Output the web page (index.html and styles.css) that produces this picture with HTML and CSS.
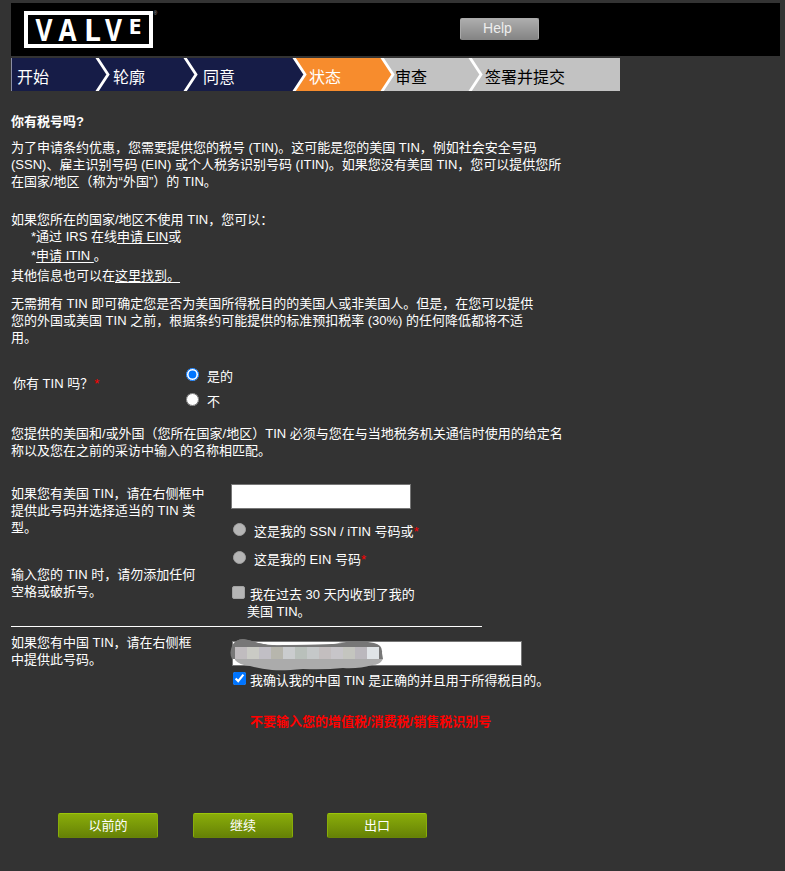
FILE: index.html
```html
<!DOCTYPE html>
<html lang="zh-CN">
<head>
<meta charset="utf-8">
<title>你有税号吗?</title>
<link rel="stylesheet" href="styles.css">
</head>
<body>
<header class="header">
  <svg class="logo" width="136" height="40" viewBox="0 0 136 40" role="img" aria-label="Valve">
    <rect x="2" y="2" width="125" height="33" fill="none" stroke="#fff" stroke-width="4"/>
    <g class="logo-text">
      <text x="11.500" y="29.500" textLength="17" lengthAdjust="spacingAndGlyphs">V</text>
      <text x="34.500" y="29.500" textLength="18" lengthAdjust="spacingAndGlyphs">A</text>
      <text x="60" y="29.500" textLength="17" lengthAdjust="spacingAndGlyphs">L</text>
      <text x="81" y="29.500" textLength="17" lengthAdjust="spacingAndGlyphs">V</text>
      <text class="logo-small" x="104.500" y="22.500" textLength="13" lengthAdjust="spacingAndGlyphs">E</text>
    </g>
    <text class="logo-mark" x="129.500" y="4">®</text>
  </svg>
  <button class="help" type="button">Help</button>
</header>

<nav class="steps">
  <svg class="steps-shape" width="609" height="33" viewBox="0 0 609 33" aria-hidden="true">
    <rect width="609" height="33" fill="#c2c2c2"/>
    <path d="M283 0H371L383 16.500L371 33H283Z" fill="#f78c2d"/>
    <path d="M0 0H283L295 16.500L283 33H0Z" fill="#161c47"/>
    <path d="M.5 0V33" stroke="#8b8ea3"/>
    <g fill="none" stroke="#fff" stroke-width="2.800">
      <path d="M85.500 -1L97 16.500L85.500 34"/><path d="M173.500 -1L185 16.500L173.500 34"/><path d="M282.500 -1L294 16.500L282.500 34"/><path d="M370.500 -1L382 16.500L370.500 34"/><path d="M458.500 -1L470 16.500L458.500 34"/>
    </g>
  </svg>
  <span class="step">开始</span><span class="step">轮廓</span><span class="step">同意</span><span class="step">状态</span><span class="step todo">审查</span><span class="step todo">签署并提交</span>
</nav>

<main>
  <h1 class="title">你有税号吗?</h1>
  <p class="intro">为了申请条约优惠，您需要提供您的税号 (TIN)。这可能是您的美国 TIN，例如社会安全号码<br>(SSN)、雇主识别号码 (EIN) 或个人税务识别号码 (ITIN)。如果您没有美国 TIN，您可以提供您所<br>在国家/地区（称为“外国”）的 TIN。</p>
  <p class="options">如果您所在的国家/地区不使用 TIN，您可以：</p>
  <p class="option">*通过 IRS 在线<a href="#">申请 EIN</a>或</p>
  <p class="option second">*<a href="#">申请 ITIN </a>。</p>
  <p class="more">其他信息也可以在<a href="#">这里找到。</a></p>
  <p class="note">无需拥有 TIN 即可确定您是否为美国所得税目的的美国人或非美国人。但是，在您可以提供<br>您的外国或美国 TIN 之前，根据条约可能提供的标准预扣税率 (30%) 的任何降低都将不适<br>用。</p>

  <div class="question">
    <span>你有 TIN 吗？<span class="req">*</span></span>
    <div class="answers">
      <label class="choice"><input type="radio" name="has" checked>是的</label>
      <label class="choice"><input type="radio" name="has">不</label>
    </div>
  </div>

  <p class="match">您提供的美国和/或外国（您所在国家/地区）TIN 必须与您在与当地税务机关通信时使用的给定名<br>称以及您在之前的采访中输入的名称相匹配。</p>

  <section class="us">
    <div>
      <p>如果您有美国 TIN，请在右侧框中<br>提供此号码并选择适当的 TIN 类<br>型。</p>
      <p class="format">输入您的 TIN 时，请勿添加任何<br>空格或破折号。</p>
    </div>
    <div class="us-fields">
      <input class="field" type="text">
      <label class="kind"><i class="off-radio"></i>这是我的 SSN / iTIN 号码或<span class="req-near">*</span></label>
      <label class="kind ein"><i class="off-radio"></i>这是我的 EIN 号码<span class="req-near">*</span></label>
      <label class="recent"><i class="off-check"></i><span><span class="recent-first">我在过去 30 天内收到了我的</span><br>美国 TIN。</span></label>
    </div>
  </section>

  <section class="cn">
    <p>如果您有中国 TIN，请在右侧框<br>中提供此号码。</p>
    <div class="cn-fields">
      <div class="masked">
        <input class="field wide" type="text">
        <svg class="mask" width="156" height="34" viewBox="0 0 156 34" aria-hidden="true">
          <path d="M2 8Q6 1 13 1Q20 2 28 5Q41 8 53 7L103 6Q128 1 144 5Q153 7 152 15L153 21H2Q-1 15 2 8Z" fill="#777"/>
          <path d="M7 4H22L31 5Q41 8 53 7L100 6L112 5H22Z" fill="#fff"/>
          <path d="M2 8Q6 1 13 1Q20 2 28 5Q41 8 53 7V10H2Z" fill="#777"/>
          <path d="M5 21H153Q150 27 142 27Q129 31 113 30Q94 32 73 31Q53 33 42 32Q30 31 20 28Q9 27 5 22Z" fill="#ababab"/>
          <g>
            <path d="M5 9h12v12H5z" fill="#c0bcbf"/><path d="M17 9h12v12H17z" fill="#cacbc5"/><path d="M29 9h12v12H29z" fill="#c1bfc5"/><path d="M41 9h12v12H41z" fill="#b7b6ad"/><path d="M53 9h12v12H53z" fill="#caccce"/><path d="M65 9h12v12H65z" fill="#b9c0bb"/><path d="M77 9h12v12H77z" fill="#c5c8c9"/><path d="M89 9h12v12H89z" fill="#c3bebf"/><path d="M101 9h12v12h-12z" fill="#c7c5c9"/><path d="M113 9h12v12h-12z" fill="#c4c5bf"/><path d="M125 9h12v12h-12z" fill="#bbb8bd"/><path d="M137 9h12v12h-12z" fill="#e0e4e7"/>
          </g>
        </svg>
      </div>
      <label class="confirm"><input type="checkbox" checked>我确认我的中国 TIN 是正确的并且用于所得税目的。</label>
      <p class="warning">不要输入您的增值税/消费税/销售税识别号</p>
    </div>
  </section>

  <div class="actions">
    <button type="button">以前的</button>
    <button type="button">继续</button>
    <button type="button">出口</button>
  </div>
</main>
</body>
</html>
```
FILE: styles.css
```css
* { box-sizing: border-box; }
body {
  margin: 0;
  padding: 3px 5px 0 11px;
  min-height: 871px;
  overflow: hidden;
  background: #333;
  color: #fff;
  font: 13px/17px "Liberation Sans", "Noto Sans CJK SC", sans-serif;
  white-space: nowrap;
}
p, h1 { margin: 0; }
a { color: inherit; text-underline-offset: 2px; }
input { accent-color: #0075ff; }

.header { display: flex; height: 53px; background: #000; }
.logo { margin: 8px 0 0 13px; overflow: visible; }
.logo-text { fill: #fff; font: bold 31px "Open Sans", sans-serif; }
.logo-small { font-size: 21px; }
.logo-mark { fill: #aaa; font-size: 5px; }
.help {
  width: 79px; height: 22px; margin: 15px 0 0 300px; padding: 0 4px 2px 0;
  border: 1px solid #aaa; border-bottom-color: #858585; border-radius: 2px;
  background: linear-gradient(#adadad, #858585);
  color: #eee; font: 14px/18px "Liberation Sans", sans-serif;
}

.steps {
  position: relative;
  display: grid; grid-template-columns: 96px 90px 106px 86px 90px 1fr;
  width: 609px; height: 33px; margin-top: 2px; padding-left: 6px;
  font-size: 16px; line-height: 39px;
}
.steps-shape { position: absolute; inset: 0; }
.step { position: relative; }
.todo { color: #000; }

.title { margin-top: 22px; font-size: 13px; line-height: 17px; }
.intro { margin-top: 9px; }
.options { margin-top: 21px; }
.option { padding-left: 20px; }
.second { margin-top: 2px; }
.more { margin-top: 3px; }
.note { margin-top: 11px; }

.question { display: flex; height: 58px; margin-top: 15px; padding-left: 2px; }
.question > span { width: 173px; padding-top: 14px; }
.req { margin-left: 1px; color: #f00; }
.req-near { color: #f00; }
.answers { display: grid; grid-template-rows: 25px 25px; padding-top: 7px; }
.choice { display: flex; height: 17px; }
.choice input { width: 13px; height: 13px; margin: 0 8px 0 0; }
.match { margin-top: 6px; }

.us { display: grid; grid-template-columns: 220px 251px; width: 471px; height: 142px; margin-top: 26px; border-bottom: 1px solid #fff; }
.format { margin-top: 30px; }
.field { display: block; width: 180px; height: 25px; margin: 0; padding: 0; border: 1px solid #767676; background: #fff; }
.kind { display: flex; height: 17px; margin-top: 14px; }
.ein { margin-top: 11px; }
.off-radio { width: 13px; height: 13px; margin: 0 8px 0 2px; border-radius: 50%; background: #b5b5b5; border: 1px solid #a2a2a2; }
.recent { display: flex; margin-top: 18px; }
.us-fields { margin-top: -1px; }
.off-check { width: 13px; height: 13px; margin: 0 2px 0 1px; border: 1px solid #a2a2a2; border-radius: 2px; background: #b5b5b5; }
.recent-first { margin-left: 3px; }

.cn { display: grid; grid-template-columns: 220px 1fr; height: 103px; margin-top: 7px; }
.cn-fields { padding-top: 7px; }
.masked { position: relative; padding-left: 1px; }
.wide { width: 290px; }
.mask { position: absolute; left: -1px; top: -3px; }
.confirm { display: flex; height: 17px; margin-top: 6px; letter-spacing: -.08px; }
.confirm input { width: 13px; height: 13px; margin: 0 4px 0 2px; }
.warning { margin: 24px 0 0 19px; color: #f00; font-weight: bold; }

.actions { display: flex; gap: 35px; margin: 76px 0 0 47px; }
.actions button {
  width: 100px; height: 25px; padding: 1px 0 0;
  border: 1px solid #88ad08; border-top-color: #9bc70a; border-bottom-color: #688407; border-radius: 2px;
  background: linear-gradient(#8aad0a, #668206);
  color: #fff; font: 13px/22px "Liberation Sans", "Noto Sans CJK SC", sans-serif;
}
.actions button:last-child { margin-left: -1px; }
```
